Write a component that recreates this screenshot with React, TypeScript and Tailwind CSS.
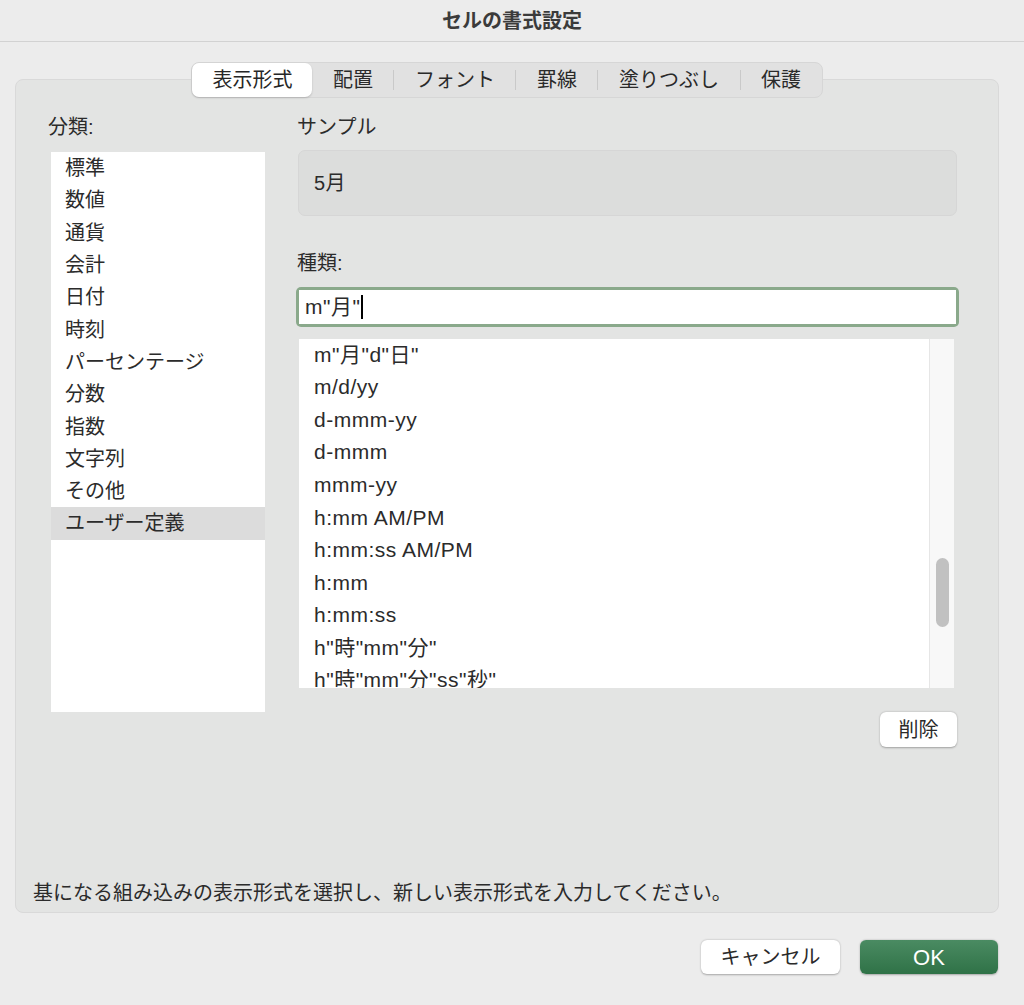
const font = { fontFamily: '"Liberation Sans", "Noto Sans CJK JP", sans-serif' };

const tabs = ['表示形式', '配置', 'フォント', '罫線', '塗りつぶし', '保護'];

const categories = [
  '標準',
  '数値',
  '通貨',
  '会計',
  '日付',
  '時刻',
  'パーセンテージ',
  '分数',
  '指数',
  '文字列',
  'その他',
  'ユーザー定義',
];

const formats = [
  'm"月"d"日"',
  'm/d/yy',
  'd-mmm-yy',
  'd-mmm',
  'mmm-yy',
  'h:mm AM/PM',
  'h:mm:ss AM/PM',
  'h:mm',
  'h:mm:ss',
  'h"時"mm"分"',
  'h"時"mm"分"ss"秒"',
];

function TabBar() {
  return (
    <div className="relative z-10 mx-auto flex h-[36px] items-center rounded-[8px] border border-[#d6d6d6] bg-[#e1e1e1]">
      {tabs.map((t, i) => {
        const active = i === 0;
        const showSep = i > 1;
        return (
          <div key={t} className="flex items-center">
            {showSep && <div className="h-[20px] w-px bg-[#c9c9c9]" />}
            <div
              className={
                active
                  ? 'flex h-[34px] items-center rounded-[7px] bg-white px-[20px] text-[20px] text-[#262626] shadow-[0_1px_2px_rgba(0,0,0,0.18)]'
                  : 'flex h-[34px] items-center px-[20.5px] text-[20px] text-[#2a2a2a]'
              }
            >
              {t}
            </div>
          </div>
        );
      })}
    </div>
  );
}

export default function App() {
  return (
    <div className="flex h-[1005px] w-[1024px] flex-col bg-[#ececec] text-[#2b2b2b]" style={font}>
      {/* Title bar */}
      <div className="flex h-[42px] shrink-0 items-center justify-center border-b border-[#d2d2d2]">
        <span className="text-[20px] font-bold text-[#3b3b3b]">セルの書式設定</span>
      </div>

      <div className="mt-[20px] flex flex-col pl-[15px] pr-[25px]">
        <TabBar />

        {/* Panel */}
        <div className="-mt-[19px] flex h-[834px] flex-col rounded-[8px] border border-[#d9d9d9] bg-[#e3e4e3]">
          <div className="flex pl-[32px] pt-[35px]">
            {/* Category column */}
            <div className="flex w-[217px] flex-col">
              <div className="h-[24px] text-[20px] leading-[24px]">分類:</div>
              <div className="ml-[3px] mt-[13px] h-[560px] w-[214px] bg-white">
                {categories.map((c, i) => (
                  <div
                    key={c}
                    className={
                      i === categories.length - 1
                        ? 'flex h-[32.3px] items-center bg-[#dcdcdc] pl-[14px] text-[20px]'
                        : 'flex h-[32.3px] items-center pl-[14px] text-[20px]'
                    }
                  >
                    {c}
                  </div>
                ))}
              </div>
            </div>

            {/* Right column */}
            <div className="ml-[31px] flex w-[663px] flex-col">
              <div className="ml-[1px] h-[24px] text-[20px] leading-[24px]">サンプル</div>
              <div className="ml-[2px] mt-[11px] flex h-[66px] w-[659px] items-center rounded-[7px] border border-[#d6d6d6] bg-[#dcdddc] pl-[15px] text-[20px] tracking-[0.5px]">
                5月
              </div>

              <div className="ml-[1px] mt-[35px] h-[24px] text-[20px] leading-[24px]">種類:</div>
              <div className="mt-[12px] h-[40px] w-[663px] rounded-[5px] bg-[#8aa98b] p-[3px]">
                <div className="flex h-full items-center bg-white pl-[6px] text-[21px] tracking-[0.5px]">
                  <span>m"月"</span>
                  <span className="ml-[1px] h-[24px] w-[1.5px] bg-black" />
                </div>
              </div>

              <div className="ml-[3px] mt-[12px] flex h-[349px] w-[655px] overflow-hidden bg-white">
                <div className="flex flex-1 flex-col -mt-[1px]">
                  {formats.map((f) => (
                    <div
                      key={f}
                      className="flex h-[32.6px] shrink-0 items-center pl-[15px] text-[21px] tracking-[0.5px]"
                    >
                      {f}
                    </div>
                  ))}
                </div>
                <div className="relative w-[25px] border-l border-[#e6e6e6] bg-[#f8f8f8]">
                  <div className="absolute left-[6px] top-[219px] h-[69px] w-[13px] rounded-full bg-[#c1c1c1]" />
                </div>
              </div>

              <div className="mr-[2px] mt-[24px] flex justify-end">
                <button className="h-[35px] w-[77px] rounded-[6px] bg-white text-[20px] text-[#2a2a2a] shadow-[0_0.5px_2px_rgba(0,0,0,0.3)]">
                  削除
                </button>
              </div>
            </div>
          </div>

          <div className="mt-auto pb-[7px] pl-[17px] text-[20px] leading-[24px] text-[#2b2b2b]">
            基になる組み込みの表示形式を選択し、新しい表示形式を入力してください。
          </div>
        </div>
      </div>

      {/* Bottom buttons */}
      <div className="mt-[27px] flex justify-end gap-[20px] pr-[26px]">
        <button className="h-[34px] w-[139px] rounded-[6px] bg-white text-[20px] text-[#2a2a2a] shadow-[0_0.5px_2px_rgba(0,0,0,0.3)]">
          キャンセル
        </button>
        <button className="h-[34px] w-[138px] rounded-[6px] bg-gradient-to-b from-[#4a8b62] to-[#2f7247] text-[22px] font-medium text-white shadow-[0_0.5px_2px_rgba(0,0,0,0.3)]">
          OK
        </button>
      </div>
    </div>
  );
}
